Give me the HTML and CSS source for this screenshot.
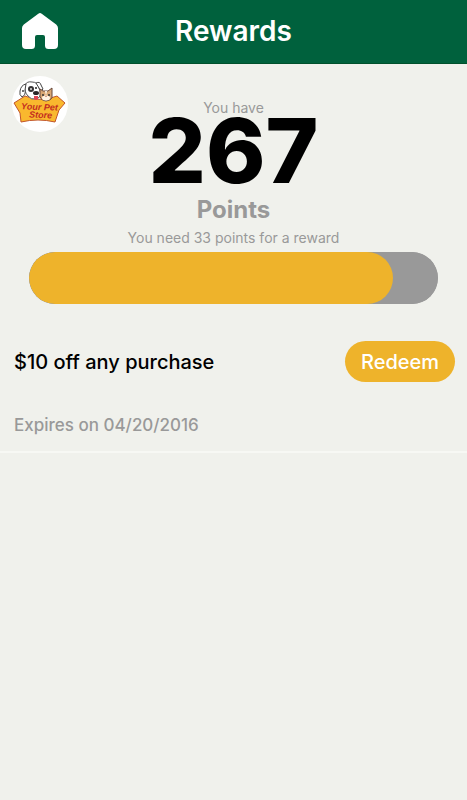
FILE: index.html
```html
<!DOCTYPE html>
<html lang="en">
<head>
    <meta charset="UTF-8">
    <meta name="viewport" content="width=device-width, initial-scale=1.0">
    <title>Rewards</title>
    <link rel="stylesheet" href="styles.css">
</head>
<body>
    <header class="top-bar">
        <a class="home" href="#" aria-label="Home">
            <svg width="36" height="36" viewBox="0 0 36 36">
                <path fill="#fff" d="M16.300 .8Q18-.6 19.700 .8L34.200 11.500Q36 13 36 15V32Q36 36 32 36H26.500Q23 36 23 32.500V24Q23 22 21 22H15Q13 22 13 24V32.500Q13 36 9.500 36H4Q0 36 0 32V15Q0 13 1.800 11.500Z"/>
            </svg>
        </a>
        <h1>Rewards</h1>
    </header>

    <main>
        <section class="summary">
            <svg class="logo" viewBox="0 0 56 56" role="img" aria-label="Your Pet Store">
                <circle cx="28" cy="28" r="28" fill="#fff"/>
                <!-- sign -->
                <path d="M2 27L13 20Q28 27 45 20L53 27L47 34L43 46Q26 42 9 46L8 37Z" fill="#f9b82e" stroke="#c2552a" stroke-width="1"/>
                <!-- dog -->
                <path d="M13 9Q15 5 20 6Q26 6 27 12L29 18Q28 22 24 23Q19 24 16 20Q12 16 13 9Z" fill="#fff" stroke="#555" stroke-width="1"/>
                <path d="M14 8Q9 9 8 15Q7 19 10 21Q14 19 13 14Z" fill="#fff" stroke="#444" stroke-width="1"/>
                <path d="M24 7Q28 5 29 9L31 13Q29 16 27 12Z" fill="#fff" stroke="#444" stroke-width="1"/>
                <circle cx="11" cy="15" r="1" fill="#444"/>
                <ellipse cx="19" cy="13" rx="3" ry="3" fill="#353334"/>
                <circle cx="19" cy="13" r="1" fill="#ddd"/>
                <circle cx="24" cy="12" r="1" fill="#222"/>
                <ellipse cx="24" cy="17" rx="3" ry="2" fill="#292627"/>
                <path d="M22 20h4v3q-2 2-4 0z" fill="#df4554"/>
                <!-- cat -->
                <path d="M28 18L28 13L31 15H36L40 12L40 19Q41 24 34 25Q27 24 28 18Z" fill="#d9a774" stroke="#69483a" stroke-width="1"/>
                <ellipse cx="34" cy="22" rx="4" ry="2.500" fill="#fff3e3"/>
                <path d="M33 15h2l-1 5z" fill="#fff3e3"/>
                <circle cx="31" cy="19" r="1" fill="#333"/>
                <circle cx="37" cy="19" r="1" fill="#333"/>
                <path d="M33 20h2l-1 1z" fill="#a74d43"/>
                <text class="logo-text" x="9" y="34" transform="rotate(2 28 34)">Your Pet</text>
                <text class="logo-text" x="17" y="42" transform="rotate(2 28 42)">Store</text>
            </svg>
            <div class="points">
                <p class="note">You have</p>
                <p class="amount">267</p>
                <p class="unit">Points</p>
                <label class="note" for="reward-progress">You need 33 points for a reward</label>
            </div>
        </section>
        <progress class="bar" id="reward-progress" value="267" max="300"></progress>

        <section class="reward">
            <div class="reward-row">
                <h2>$10 off any purchase</h2>
                <button class="redeem" type="button">Redeem</button>
            </div>
            <p class="expires">Expires on 04/20/2016</p>
        </section>
    </main>
</body>
</html>
```
FILE: styles.css
```css
* {
    box-sizing: border-box;
}
body {
    font-family: Inter, "Open Sans", sans-serif;
    margin: 0;
    background-color: #f0f1ec;
    color: #000;
}
h1, h2, p {
    margin: 0;
}
.top-bar {
    display: grid;
    grid-template-columns: 36px 1fr 36px;
    align-items: center;
    height: 64px;
    padding: 0 22px 2px;
    background-color: #00613d;
    border-bottom: 1px solid #00512c;
}
.home {
    display: flex;
}
.top-bar h1 {
    color: #fff;
    font-size: 28px;
    font-weight: 600;
    line-height: 32px;
    text-align: center;
}
.summary {
    display: grid;
    grid-template-columns: 56px 1fr 56px;
    padding: 12px 12px 0;
}
.logo {
    width: 56px;
    height: 56px;
}
.logo-text {
    font-family: "Liberation Sans", sans-serif;
    font-size: 9px;
    font-style: italic;
    font-weight: bold;
    fill: #c42c20;
}
.points {
    display: flex;
    flex-direction: column;
    align-items: center;
    padding-top: 24px;
    color: #999;
}
.note {
    font-size: 14px;
    font-weight: 400;
    line-height: 16px;
}
.amount {
    color: #000;
    font-size: 90px;
    font-weight: 800;
    line-height: 70px;
}
.unit {
    margin: 10px 0 6px;
    font-size: 24px;
    font-weight: 700;
    line-height: 28px;
}
.bar {
    display: block;
    width: calc(100% - 58px);
    height: 52px;
    margin: 6px auto 0;
    border: none;
    border-radius: 26px;
    overflow: hidden;
    appearance: none;
    background-color: #999;
}
.bar::-webkit-progress-bar {
    background-color: #999;
    border-radius: 26px;
}
.bar::-webkit-progress-value {
    background-color: #eeb32b;
    border-radius: 26px;
}
.reward {
    margin-top: 37px;
    padding: 0 12px 16px 14px;
    border-bottom: 2px solid #f7f8f4;
}
.reward-row {
    display: flex;
    align-items: center;
    justify-content: space-between;
}
.reward-row h2 {
    font-size: 20px;
    font-weight: 500;
}
.redeem {
    width: 110px;
    height: 41px;
    padding: 0;
    border: none;
    border-radius: 21px;
    background-color: #eeb32b;
    color: #fff;
    font-family: inherit;
    font-size: 20px;
    font-weight: 500;
    cursor: pointer;
}
.expires {
    margin-top: 33px;
    color: #999;
    font-size: 17px;
    font-weight: 500;
    line-height: 20px;
}
```
